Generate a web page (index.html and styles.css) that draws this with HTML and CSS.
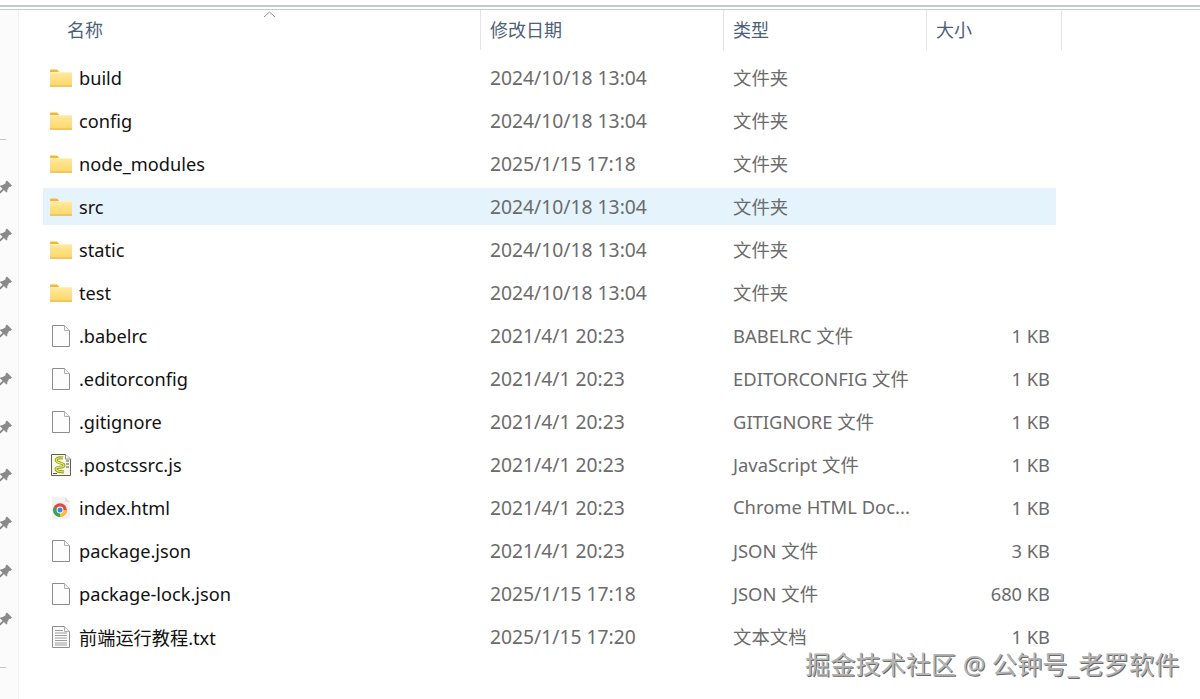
FILE: index.html
```html
<!DOCTYPE html>
<html lang="zh">
<head>
<meta charset="utf-8">
<title>文件列表</title>
<link rel="stylesheet" href="styles.css">
</head>
<body>
<svg class="defs" width="0" height="0" aria-hidden="true">
  <defs>
    <linearGradient id="fg" x1="0" y1="0" x2="0" y2="1"><stop offset="0" stop-color="#ffeaa0"/><stop offset="1" stop-color="#fdd668"/></linearGradient>
    <symbol id="folder" viewBox="0 0 24 20">
      <path d="M1 2.5 Q1 1.500 2 1.500 H8 L10 3.500 V6 H1 Z" fill="#f5b72e"/>
      <rect x="1" y="4" width="22" height="14.500" fill="url(#fg)"/>
      <rect x="1" y="17.600" width="22" height="1" fill="#e9ad3c"/>
      <rect x="1" y="4" width="22" height=".8" fill="#fff2c4"/>
    </symbol>
    <symbol id="file" viewBox="0 0 24 24">
      <path d="M3.500 1.500 H15.500 L20.500 6.500 V22.500 H3.500 Z" fill="#fdfdfd" stroke="#8c8c8c"/>
      <path d="M15.500 1.500 V6.500 H20.500" fill="#f2f2f2" stroke="#b0b0b0"/>
    </symbol>
    <symbol id="txt" viewBox="0 0 24 24">
      <path d="M3.500 1.500 H15.500 L20.500 6.500 V22.500 H3.500 Z" fill="#fdfdfd" stroke="#8c8c8c"/>
      <path d="M15.500 1.500 V6.500 H20.500" fill="#f2f2f2" stroke="#b0b0b0"/>
      <path d="M6 5.500 H14 M6 8 H18 M6 10.500 H18 M6 13 H18 M6 15.500 H18 M6 18 H18 M6 20 H18" stroke="#9a9a9a" stroke-width="1" fill="none"/>
    </symbol>
    <symbol id="script" viewBox="0 0 24 24">
      <path d="M2.500 1.500 H16.500 L21.500 6 V22.500 H2.500 Z" fill="#f7f7ec" stroke="#5f6350"/>
      <path d="M16.500 1.500 V6 H21.500" fill="#fff" stroke="#8a8a80"/>
      <path d="M14 5 C8 4 6 6.500 8 8.500 C10 10.500 15 10 15 12.500 C15 15 9 13.500 7.500 15 C6 16.500 8.500 18.500 11 18.500 L15 19" fill="none" stroke="#8f9c1a" stroke-width="3"/>
      <path d="M14 5 C8 4 6 6.500 8 8.500 C10 10.500 15 10 15 12.500 C15 15 9 13.500 7.500 15 C6 16.500 8.500 18.500 11 18.500 L15 19" fill="none" stroke="#e8ec5e" stroke-width="1.200"/>
      <path d="M17 8 H20 M17 11 H20 M17 14 H20 M4 20.500 H8" stroke="#55584a" stroke-width="1"/>
    </symbol>
    <symbol id="chrome" viewBox="0 0 24 24">
      <path d="M3 1 H16 L21 6 V23 H3 Z" fill="#f3f1f1"/>
      <path d="M16 1 V6 H21" fill="#e4e0e0"/>
      <circle cx="11" cy="14" r="6.800" fill="#e8453c"/>
      <path d="M11 14 L5.100 10.600 A6.800 6.800 0 0 0 11 20.800 L14.400 14 Z" fill="#34a853"/>
      <path d="M11 14 H17.800 A6.800 6.800 0 0 1 11 20.800 Z" fill="#fbc02d"/>
      <circle cx="11" cy="14" r="3.400" fill="#fff"/>
      <circle cx="11" cy="14" r="2.500" fill="#3f83e8"/>
    </symbol>
    <symbol id="pin" viewBox="0 0 14 14">
      <path d="M8.500 0 L14 5.500 L12.500 7 L11 6.800 L8.800 10.500 L9 12 L8 13 L5.200 10.200 L1.500 14 L0 14 L0 12.500 L3.800 8.800 L1 6 L2 5 L3.500 5.200 L7.200 3 L7 1.500 Z" fill="#8a8a8a"/>
    </symbol>
  </defs>
</svg>
<div class="topbar"></div>
<div class="window">
  <aside class="sidebar">
    <span class="dash"></span>
    <svg class="pin"><use href="#pin"/></svg>
    <svg class="pin"><use href="#pin"/></svg>
    <svg class="pin"><use href="#pin"/></svg>
    <svg class="pin"><use href="#pin"/></svg>
    <svg class="pin"><use href="#pin"/></svg>
    <svg class="pin"><use href="#pin"/></svg>
    <svg class="pin"><use href="#pin"/></svg>
    <svg class="pin"><use href="#pin"/></svg>
    <svg class="pin"><use href="#pin"/></svg>
    <svg class="pin"><use href="#pin"/></svg>
    <span class="dash dash-end"></span>
  </aside>
  <main class="list">
    <div class="header">
      <div class="hcell hname">名称<span class="sort"><svg width="13" height="7" viewBox="0 0 13 7"><path d="M1 6 L6.500 1 L12 6" fill="none" stroke="#8e8e8e"/></svg></span></div>
      <div class="hcell hdate">修改日期</div>
      <div class="hcell htype">类型</div>
      <div class="hcell hsize">大小</div>
    </div>
    <div class="rows">
      <div class="row"><svg class="ico ico-folder"><use href="#folder"/></svg><span class="name">build</span><span class="date">2024/10/18 13:04</span><span class="type">文件夹</span><span class="size"></span></div>
      <div class="row"><svg class="ico ico-folder"><use href="#folder"/></svg><span class="name">config</span><span class="date">2024/10/18 13:04</span><span class="type">文件夹</span><span class="size"></span></div>
      <div class="row"><svg class="ico ico-folder"><use href="#folder"/></svg><span class="name">node_modules</span><span class="date">2025/1/15 17:18</span><span class="type">文件夹</span><span class="size"></span></div>
      <div class="row selected"><svg class="ico ico-folder"><use href="#folder"/></svg><span class="name">src</span><span class="date">2024/10/18 13:04</span><span class="type">文件夹</span><span class="size"></span></div>
      <div class="row"><svg class="ico ico-folder"><use href="#folder"/></svg><span class="name">static</span><span class="date">2024/10/18 13:04</span><span class="type">文件夹</span><span class="size"></span></div>
      <div class="row"><svg class="ico ico-folder"><use href="#folder"/></svg><span class="name">test</span><span class="date">2024/10/18 13:04</span><span class="type">文件夹</span><span class="size"></span></div>
      <div class="row"><svg class="ico"><use href="#file"/></svg><span class="name">.babelrc</span><span class="date">2021/4/1 20:23</span><span class="type">BABELRC 文件</span><span class="size">1 KB</span></div>
      <div class="row"><svg class="ico"><use href="#file"/></svg><span class="name">.editorconfig</span><span class="date">2021/4/1 20:23</span><span class="type">EDITORCONFIG 文件</span><span class="size">1 KB</span></div>
      <div class="row"><svg class="ico"><use href="#file"/></svg><span class="name">.gitignore</span><span class="date">2021/4/1 20:23</span><span class="type">GITIGNORE 文件</span><span class="size">1 KB</span></div>
      <div class="row"><svg class="ico"><use href="#script"/></svg><span class="name">.postcssrc.js</span><span class="date">2021/4/1 20:23</span><span class="type">JavaScript 文件</span><span class="size">1 KB</span></div>
      <div class="row"><svg class="ico"><use href="#chrome"/></svg><span class="name">index.html</span><span class="date">2021/4/1 20:23</span><span class="type">Chrome HTML Doc...</span><span class="size">1 KB</span></div>
      <div class="row"><svg class="ico"><use href="#file"/></svg><span class="name">package.json</span><span class="date">2021/4/1 20:23</span><span class="type">JSON 文件</span><span class="size">3 KB</span></div>
      <div class="row"><svg class="ico"><use href="#file"/></svg><span class="name">package-lock.json</span><span class="date">2025/1/15 17:18</span><span class="type">JSON 文件</span><span class="size">680 KB</span></div>
      <div class="row"><svg class="ico"><use href="#txt"/></svg><span class="name">前端运行教程.txt</span><span class="date">2025/1/15 17:20</span><span class="type">文本文档</span><span class="size">1 KB</span></div>
    </div>
  </main>
</div>
<div class="watermark">掘金技术社区 @ 公钟号_老罗软件</div>
</body>
</html>
```
FILE: styles.css
```css
* { box-sizing: border-box; }
html, body { margin: 0; height: 100%; overflow: hidden; }
body {
  background: #fff;
  font-family: "Noto Sans", "Noto Sans CJK SC", sans-serif;
  font-size: 18.200px;
  color: #1c1c1c;
  position: relative;
}
.defs { position: absolute; }
.topbar { height: 10px; background: linear-gradient(#fff 0 5px, #c4c9c9 5px 7px, #fff 7px 9px, #c8cccc 9px 10px); }
.window { display: flex; height: 689px; }
.sidebar {
  width: 19px;
  flex: none;
  background: #fbfbfb;
  border-right: 1px solid #f0f0f0;
  display: flex;
  flex-direction: column;
  padding-top: 129px;
  align-items: flex-start;
}
.dash { display: block; width: 6px; height: 1px; background: #c8c8c8; flex: none; }
.pin { display: block; width: 13px; height: 14px; flex: none; margin: 0 0 34px -1px; }
.dash + .pin { margin-top: 40px; }
.dash-end { margin-top: 7px; }
.list { flex: 1; min-width: 0; }
.header { display: flex; height: 40px; color: #4c607a; font-size: 18px; }
.hcell { display: flex; align-items: center; padding: 0 0 2px 9px; border-right: 1px solid #e5e5e5; position: relative; }
.hname { width: 462px; padding-left: 48px; }
.hdate { width: 243px; }
.htype { width: 203px; }
.hsize { width: 135px; }
.sort { position: absolute; left: 244px; top: 1px; line-height: 0; }
.rows { display: flex; flex-direction: column; gap: 6px; margin: 9px 0 0 24px; width: 1013px; }
.row { display: flex; align-items: center; height: 37px; }
.selected { background: #e5f3fd; }
.ico { width: 24px; height: 24px; flex: none; margin-left: 6px; }
.ico-folder { height: 20px; }
.name { width: 411px; margin-left: 6px; flex: none; color: #111; white-space: nowrap; }
.date { width: 243px; flex: none; color: #6b6b6b; font-size: 19.300px; white-space: nowrap; }
.type { width: 214px; flex: none; color: #6b6b6b; font-size: 18.400px; white-space: nowrap; padding-bottom: 2px; }
.size { width: 103px; flex: none; color: #6b6b6b; font-size: 18.300px; text-align: right; white-space: nowrap; }
.watermark {
  position: absolute;
  left: 805px;
  top: 649px;
  font-size: 25.200px;
  line-height: 30px;
  white-space: nowrap;
  color: #b4b4b4;
  text-shadow: 1px 1px 0 #6a6a6a, -1px -1px 0 #fff;
}
```
